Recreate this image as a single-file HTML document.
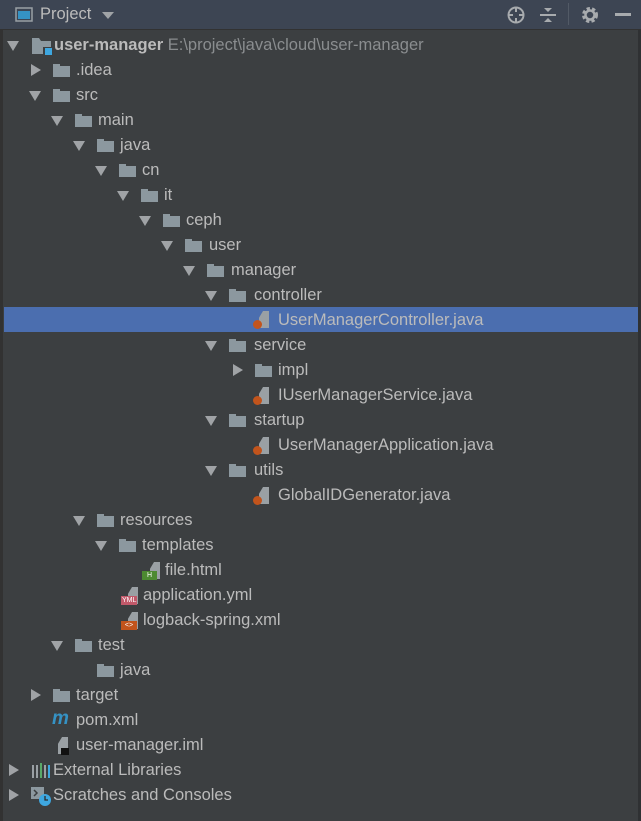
<!DOCTYPE html>
<html><head><style>
body{margin:0;width:641px;height:821px;background:#3c3f41;overflow:hidden;font-family:"Liberation Sans",sans-serif;position:relative}
.hdr{position:absolute;left:0;top:0;width:641px;height:29px;background:#3d4553;border-bottom:1px solid #323232}
.r{position:absolute;left:0;width:638px;height:25px;color:#bbbbbb;font-size:16.5px;line-height:25px}
.sel{background:#4b6eaf;left:4px;width:634px}
.a{position:absolute;top:7px;width:0;height:0}
.dn{border-left:6px solid transparent;border-right:6px solid transparent;border-top:10px solid #a0a3a6;top:8px}
.rt{border-top:6px solid transparent;border-bottom:6px solid transparent;border-left:10px solid #a0a3a6;top:6px}
.f{position:absolute;top:6px;width:17px;height:13px}
.f:before{content:"";position:absolute;left:0;top:0;width:7px;height:3px;background:#8c989f}
.f:after{content:"";position:absolute;left:0;top:2px;width:17px;height:11px;background:#8c989f}
.t{position:absolute;top:0;white-space:nowrap}
.doc{position:absolute;top:4px;width:13px;height:17px}
.doc:before{content:"";position:absolute;left:3px;top:0;width:10px;height:17px;background:#9aa0a4;clip-path:polygon(40% 0,100% 0,100% 100%,0 100%,0 40%)}
.j{position:absolute;left:-3px;bottom:-1px;width:9px;height:9px;border-radius:50%;background:#c2541c}
.tag{position:absolute;bottom:-1px;left:-5px;height:9px;font-size:7px;line-height:9px;color:#fff;padding:0 1px}
</style></head><body>
<div class="hdr">
<svg style="position:absolute;left:15px;top:7px" width="18" height="15"><rect x="1" y="1" width="16" height="13" fill="none" stroke="#9aa0a5" stroke-width="1.5"/><rect x="3" y="4" width="12" height="8" fill="#3592c4"/></svg>
<span style="position:absolute;left:40px;top:5px;color:#bbbbbb;font-size:16.5px">Project</span>
<div style="position:absolute;left:102px;top:12px;border-left:6px solid transparent;border-right:6px solid transparent;border-top:7px solid #a0a3a6"></div>
<svg style="position:absolute;left:505px;top:4px" width="22" height="22"><circle cx="11" cy="11" r="7.5" fill="none" stroke="#a8abae" stroke-width="2"/><path d="M11 3v5M11 14v5M3 11h5M14 11h5" stroke="#a8abae" stroke-width="2"/></svg>
<svg style="position:absolute;left:538px;top:4px" width="20" height="22"><path d="M2 11h16" stroke="#a8abae" stroke-width="2"/><path d="M6 4h8l-4 4z M6 18h8l-4-4z" fill="#a8abae"/></svg>
<div style="position:absolute;left:568px;top:3px;width:1px;height:22px;background:#525a66"></div>
<svg style="position:absolute;left:580px;top:5px" width="20" height="20"><circle cx="10" cy="10" r="6" fill="none" stroke="#a8abae" stroke-width="4" stroke-dasharray="3 2"/><circle cx="10" cy="10" r="4.5" fill="none" stroke="#a8abae" stroke-width="2.5"/></svg>
<div style="position:absolute;left:615px;top:13px;width:16px;height:3px;background:#a8abae"></div>
</div>
<div style="position:absolute;left:0;top:30px;width:3px;height:791px;background:#323232"></div>
<div style="position:absolute;left:638px;top:30px;width:3px;height:791px;background:#2f3133"></div>

<div class="r" style="top:33px"><div class="a dn" style="left:7px"></div>
<svg style="position:absolute;left:31px;top:3px" width="22" height="20"><path d="M1 2h7l2 3h10v13H1z" fill="#8c989f"/><rect x="12" y="11" width="9" height="8" fill="#3c3f41"/><rect x="14" y="12" width="7" height="7" fill="#3ea7e0"/></svg>
<span class="t" style="left:54px"><b>user-manager</b> <span style="color:#8a8d8f">E:\project\java\cloud\user-manager</span></span></div>

<div class="r" style="top:58px"><div class="a rt" style="left:31px"></div><div class="f" style="left:53px"></div><span class="t" style="left:76px">.idea</span></div>
<div class="r" style="top:83px"><div class="a dn" style="left:29px"></div><div class="f" style="left:53px"></div><span class="t" style="left:76px">src</span></div>
<div class="r" style="top:108px"><div class="a dn" style="left:51px"></div><div class="f" style="left:75px"></div><span class="t" style="left:98px">main</span></div>
<div class="r" style="top:133px"><div class="a dn" style="left:73px"></div><div class="f" style="left:97px"></div><span class="t" style="left:120px">java</span></div>
<div class="r" style="top:158px"><div class="a dn" style="left:95px"></div><div class="f" style="left:119px"></div><span class="t" style="left:142px">cn</span></div>
<div class="r" style="top:183px"><div class="a dn" style="left:117px"></div><div class="f" style="left:141px"></div><span class="t" style="left:164px">it</span></div>
<div class="r" style="top:208px"><div class="a dn" style="left:139px"></div><div class="f" style="left:163px"></div><span class="t" style="left:186px">ceph</span></div>
<div class="r" style="top:233px"><div class="a dn" style="left:161px"></div><div class="f" style="left:185px"></div><span class="t" style="left:209px">user</span></div>
<div class="r" style="top:258px"><div class="a dn" style="left:183px"></div><div class="f" style="left:207px"></div><span class="t" style="left:231px">manager</span></div>
<div class="r" style="top:283px"><div class="a dn" style="left:205px"></div><div class="f" style="left:229px"></div><span class="t" style="left:254px">controller</span></div>
<div class="r sel" style="top:307px;height:25px"><div class="doc" style="left:252px"><div class="j"></div></div><span class="t" style="left:274px;top:1px">UserManagerController.java</span></div>
<div class="r" style="top:333px"><div class="a dn" style="left:205px"></div><div class="f" style="left:229px"></div><span class="t" style="left:254px">service</span></div>
<div class="r" style="top:358px"><div class="a rt" style="left:233px"></div><div class="f" style="left:255px"></div><span class="t" style="left:278px">impl</span></div>
<div class="r" style="top:383px"><div class="doc" style="left:256px"><div class="j"></div></div><span class="t" style="left:278px">IUserManagerService.java</span></div>
<div class="r" style="top:408px"><div class="a dn" style="left:205px"></div><div class="f" style="left:229px"></div><span class="t" style="left:254px">startup</span></div>
<div class="r" style="top:433px"><div class="doc" style="left:256px"><div class="j"></div></div><span class="t" style="left:278px">UserManagerApplication.java</span></div>
<div class="r" style="top:458px"><div class="a dn" style="left:205px"></div><div class="f" style="left:229px"></div><span class="t" style="left:254px">utils</span></div>
<div class="r" style="top:483px"><div class="doc" style="left:256px"><div class="j"></div></div><span class="t" style="left:278px">GlobalIDGenerator.java</span></div>
<div class="r" style="top:508px"><div class="a dn" style="left:73px"></div><div class="f" style="left:97px"></div><span class="t" style="left:120px">resources</span></div>
<div class="r" style="top:533px"><div class="a dn" style="left:95px"></div><div class="f" style="left:119px"></div><span class="t" style="left:142px">templates</span></div>
<div class="r" style="top:558px"><div class="doc" style="left:147px"><div class="tag" style="background:#4c8a31;width:13px;text-align:center">H</div></div><span class="t" style="left:165px">file.html</span></div>
<div class="r" style="top:583px"><div class="doc" style="left:125px"><div class="tag" style="background:#c1596a;left:-4px">YML</div></div><span class="t" style="left:143px">application.yml</span></div>
<div class="r" style="top:608px"><div class="doc" style="left:125px"><div class="tag" style="background:#c2541c;left:-4px;width:14px;text-align:center">&lt;&gt;</div></div><span class="t" style="left:143px">logback-spring.xml</span></div>
<div class="r" style="top:633px"><div class="a dn" style="left:51px"></div><div class="f" style="left:75px"></div><span class="t" style="left:98px">test</span></div>
<div class="r" style="top:658px"><div class="f" style="left:97px"></div><span class="t" style="left:120px">java</span></div>
<div class="r" style="top:683px"><div class="a rt" style="left:31px"></div><div class="f" style="left:53px"></div><span class="t" style="left:76px">target</span></div>
<div class="r" style="top:708px"><span class="t" style="left:52px;color:#3592c4;font-weight:bold;font-style:italic;font-size:19px;top:-2px">m</span><span class="t" style="left:76px">pom.xml</span></div>
<div class="r" style="top:733px"><div class="doc" style="left:55px"><div style="position:absolute;left:6px;bottom:-1px;width:8px;height:7px;background:#111"></div></div><span class="t" style="left:76px">user-manager.iml</span></div>
<div class="r" style="top:758px"><div class="a rt" style="left:9px"></div>
<svg style="position:absolute;left:31px;top:5px" width="20" height="15"><rect x="1" y="2" width="2" height="13" fill="#9aa0a4"/><rect x="5" y="2" width="2" height="13" fill="#9aa0a4"/><rect x="9" y="0" width="2" height="15" fill="#59a869"/><rect x="13" y="2" width="2" height="13" fill="#9aa0a4"/><rect x="17" y="2" width="2" height="13" fill="#3ea7e0"/></svg>
<span class="t" style="left:53px">External Libraries</span></div>
<div class="r" style="top:783px"><div class="a rt" style="left:9px"></div>
<svg style="position:absolute;left:30px;top:3px" width="22" height="21"><rect x="1" y="1" width="13" height="12" fill="#8c989f"/><path d="M4 4l3 3-3 3" stroke="#3c3f41" fill="none" stroke-width="1.5"/><circle cx="15" cy="14" r="6" fill="#3ea7e0"/><path d="M15 10v4h3" stroke="#2b2b2b" fill="none" stroke-width="1.3"/></svg>
<span class="t" style="left:53px">Scratches and Consoles</span></div>
</body></html>
